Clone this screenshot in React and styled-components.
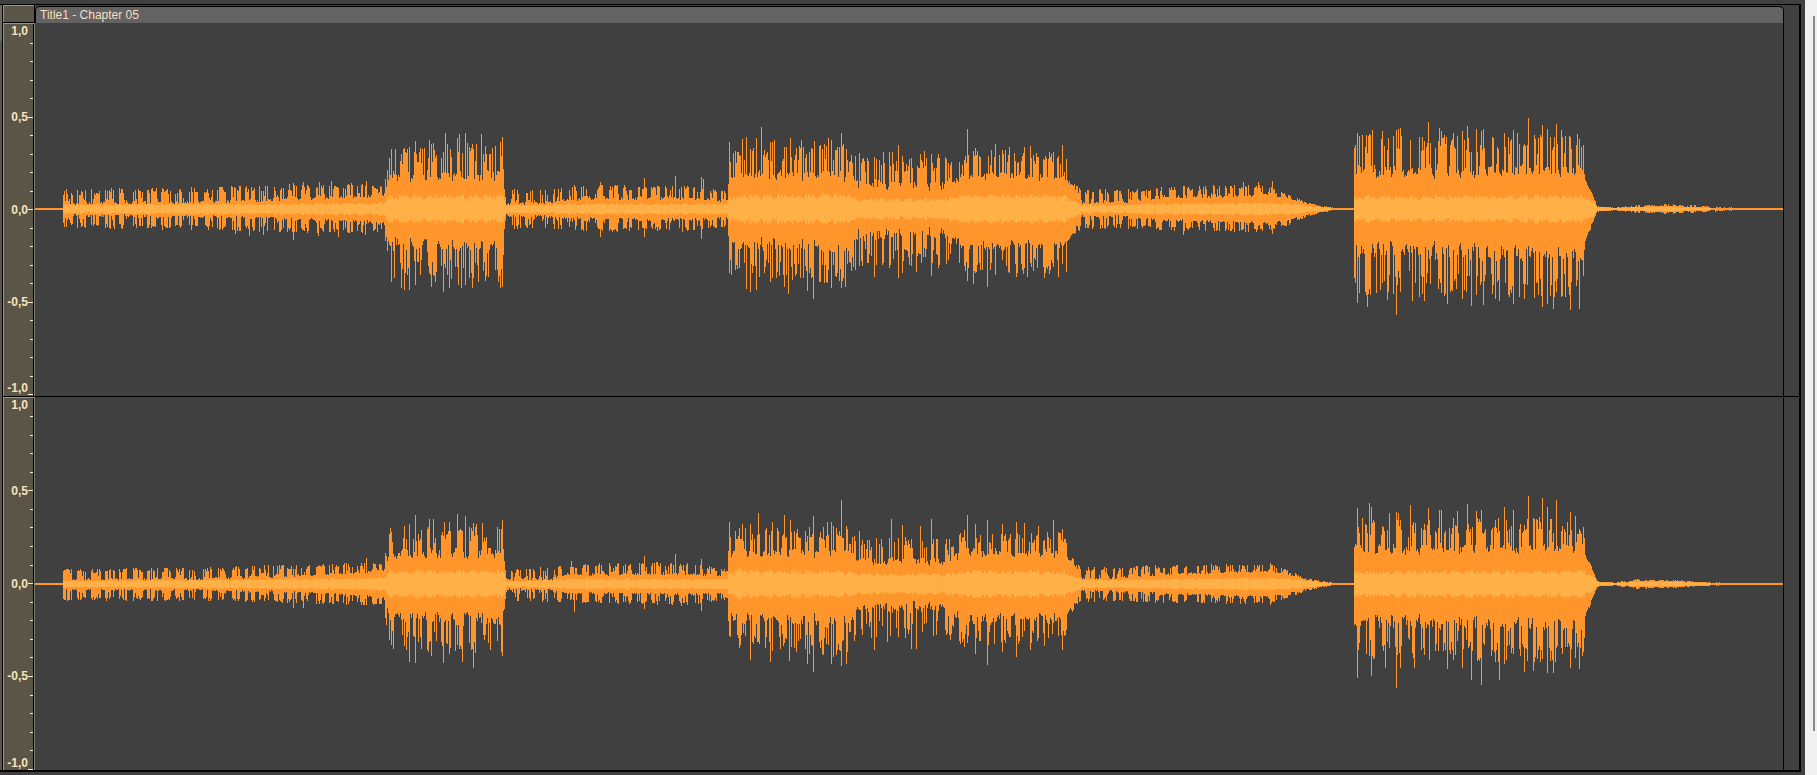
import React from 'react';

// third-party libraries
import styled, { createGlobalStyle } from 'styled-components';

const CLIP_START = 35;
const WAVE_WIDTH = 1748;
const WAVE_HEIGHT = 372;
const BEAT = 14;

// [x, valley up, peak up, valley down, peak down, rms]
const LEFT_ENVELOPE = [
  [63, 4, 20, 5, 20, 4],
  [200, 5, 22, 6, 21, 5],
  [300, 8, 25, 8, 25, 5],
  [383, 12, 25, 12, 24, 6],
  [389, 29, 60, 31, 68, 13],
  [502, 30, 65, 34, 74, 13],
  [504, 18, 28, 18, 28, 9],
  [506, 4, 20, 5, 21, 4],
  [552, 5, 20, 6, 20, 4],
  [566, 8, 24, 8, 22, 5],
  [680, 9, 25, 9, 24, 5],
  [727, 7, 18, 8, 18, 5],
  [729, 29, 60, 30, 66, 13],
  [842, 31, 66, 35, 76, 14],
  [860, 22, 50, 21, 57, 10],
  [945, 20, 52, 21, 57, 10],
  [965, 31, 56, 34, 66, 14],
  [1064, 29, 58, 33, 66, 13],
  [1074, 20, 25, 20, 25, 8],
  [1082, 5, 20, 6, 20, 4],
  [1120, 5, 20, 6, 20, 4],
  [1150, 9, 22, 9, 21, 5],
  [1270, 13, 25, 13, 24, 6],
  [1292, 9, 13, 9, 15, 5],
  [1310, 4, 6, 5, 7, 3],
  [1330, 1, 2, 1, 2, 1],
  [1335, 1, 1, 1, 1, 0],
  [1353, 1, 1, 1, 1, 0],
  [1354, 33, 74, 34, 86, 12],
  [1583, 34, 74, 40, 90, 13],
  [1586, 26, 30, 28, 34, 11],
  [1592, 13, 15, 12, 15, 8],
  [1597, 2, 3, 2, 3, 2],
  [1614, 1, 2, 1, 2, 1],
  [1640, 2, 4, 2, 4, 2],
  [1672, 3, 5, 3, 5, 2],
  [1710, 1, 3, 1, 3, 1],
  [1742, 1, 1, 1, 1, 0],
  [1783, 1, 1, 1, 1, 0],
];

const RIGHT_ENVELOPE = [
  [63, 3, 15, 4, 17, 3],
  [200, 4, 17, 5, 17, 4],
  [300, 7, 20, 7, 20, 5],
  [383, 12, 22, 12, 22, 6],
  [389, 27, 56, 28, 66, 13],
  [502, 28, 58, 32, 72, 13],
  [504, 16, 24, 16, 26, 9],
  [506, 3, 16, 4, 18, 3],
  [552, 4, 17, 5, 18, 4],
  [566, 8, 20, 8, 19, 5],
  [680, 9, 23, 9, 22, 5],
  [727, 7, 15, 8, 16, 5],
  [729, 27, 56, 29, 64, 13],
  [842, 29, 58, 33, 74, 13],
  [860, 20, 46, 20, 54, 10],
  [945, 20, 48, 20, 55, 10],
  [965, 29, 54, 32, 64, 13],
  [1064, 28, 54, 31, 62, 12],
  [1074, 18, 22, 18, 22, 8],
  [1082, 4, 17, 5, 18, 4],
  [1120, 5, 17, 6, 18, 4],
  [1150, 8, 19, 8, 19, 5],
  [1270, 12, 21, 12, 21, 6],
  [1292, 8, 12, 8, 12, 5],
  [1310, 3, 5, 4, 6, 3],
  [1330, 1, 2, 1, 2, 1],
  [1335, 1, 1, 1, 1, 0],
  [1353, 1, 1, 1, 1, 0],
  [1354, 31, 64, 32, 76, 12],
  [1583, 33, 66, 38, 80, 13],
  [1586, 26, 32, 28, 34, 11],
  [1592, 12, 15, 12, 15, 8],
  [1597, 2, 3, 2, 3, 2],
  [1614, 1, 2, 1, 2, 1],
  [1636, 3, 5, 3, 5, 2],
  [1672, 3, 4, 3, 4, 2],
  [1710, 1, 2, 1, 2, 1],
  [1734, 1, 1, 1, 1, 0],
  [1783, 1, 1, 1, 1, 0],
];

// loudest samples, [x, height]
const LEFT_PEAKS_UP = [
  [289, 25], [293, 26], [303, 27], [319, 27], [331, 28], [351, 26], [366, 28],
  [391, 60], [395, 60], [401, 55], [404, 61], [407, 60], [409, 62], [415, 68],
  [420, 61], [422, 60], [424, 61], [429, 69], [431, 65], [433, 66], [445, 76],
  [447, 65], [450, 60], [457, 71], [459, 75], [462, 56], [465, 76], [467, 66],
  [472, 65], [476, 65], [481, 75], [486, 55], [492, 61], [495, 63], [500, 67],
  [502, 72], [600, 27], [644, 31], [675, 33], [701, 32], [703, 30],
  [729, 67], [733, 56], [737, 57], [742, 70], [746, 72], [750, 60], [756, 71],
  [761, 82], [764, 59], [770, 67], [772, 67], [774, 69], [784, 62], [786, 62],
  [790, 71], [801, 69], [803, 62], [814, 68], [819, 63], [822, 60], [828, 71],
  [831, 69], [841, 76], [843, 65], [846, 60], [859, 56], [863, 51], [867, 51],
  [874, 52], [883, 57], [889, 57], [892, 57], [898, 64], [902, 53], [920, 55],
  [924, 58], [931, 55], [938, 55], [945, 52], [967, 80], [973, 58], [975, 61],
  [977, 58], [991, 59], [995, 65], [999, 54], [1002, 59], [1005, 59],
  [1009, 62], [1014, 56], [1024, 62], [1030, 63], [1038, 52], [1053, 57],
  [1062, 64], [1066, 50], [1243, 27], [1258, 27], [1272, 28], [1357, 76],
  [1362, 74], [1369, 75], [1372, 79], [1382, 78], [1396, 79], [1398, 80],
  [1400, 81], [1410, 69], [1419, 72], [1424, 68], [1428, 87], [1439, 81],
  [1441, 78], [1446, 72], [1453, 76], [1457, 73], [1462, 78], [1467, 83],
  [1476, 80], [1481, 78], [1483, 80], [1493, 71], [1504, 76], [1513, 79],
  [1517, 76], [1528, 91], [1540, 74], [1542, 84], [1547, 80], [1556, 85],
  [1561, 79], [1570, 72], [1577, 75], [1583, 64],
];

const LEFT_PEAKS_DOWN = [
  [235, 25], [249, 27], [263, 26], [293, 31], [318, 27], [338, 28], [365, 26],
  [391, 73], [394, 69], [401, 79], [404, 81], [409, 81], [415, 76], [420, 66],
  [431, 78], [435, 73], [443, 83], [449, 79], [458, 76], [461, 79], [465, 76],
  [472, 79], [478, 73], [488, 68], [495, 61], [500, 79], [502, 78], [600, 28],
  [644, 28], [701, 30], [731, 66], [737, 60], [746, 80], [750, 83], [756, 81],
  [764, 64], [770, 73], [776, 69], [784, 78], [788, 85], [792, 71], [803, 69],
  [807, 82], [813, 90], [819, 73], [827, 74], [831, 79], [841, 79], [845, 78],
  [853, 58], [859, 57], [867, 54], [874, 68], [882, 56], [889, 59], [898, 69],
  [902, 64], [916, 63], [931, 67], [938, 59], [967, 72], [973, 75], [982, 61],
  [987, 78], [995, 66], [1009, 64], [1016, 68], [1027, 68], [1044, 69],
  [1058, 68], [1066, 63], [1183, 26], [1272, 25], [1357, 94], [1367, 98],
  [1376, 84], [1387, 91], [1396, 106], [1400, 83], [1412, 92], [1419, 88],
  [1424, 92], [1447, 95], [1462, 90], [1471, 97], [1476, 86], [1483, 96],
  [1495, 90], [1499, 92], [1513, 95], [1519, 88], [1524, 90], [1542, 98],
  [1547, 95], [1553, 100], [1561, 88], [1570, 101], [1579, 100],
];

const RIGHT_PEAKS_UP = [
  [366, 26], [390, 56], [404, 58], [409, 60], [415, 68], [429, 64], [433, 64],
  [444, 62], [449, 62], [457, 69], [465, 67], [473, 61], [476, 60], [482, 61],
  [502, 63], [571, 23], [644, 28], [675, 30], [701, 25], [729, 62], [742, 60],
  [750, 60], [758, 70], [772, 62], [784, 68], [790, 63], [813, 67], [827, 62],
  [831, 62], [841, 83], [846, 58], [859, 53], [891, 64], [902, 59], [920, 58],
  [931, 64], [967, 68], [975, 60], [987, 63], [1002, 60], [1016, 62],
  [1024, 61], [1038, 58], [1053, 63], [1062, 55], [1357, 75], [1362, 65],
  [1369, 80], [1371, 76], [1389, 70], [1396, 71], [1398, 70], [1410, 78],
  [1428, 75], [1439, 73], [1441, 73], [1457, 72], [1467, 79], [1476, 72],
  [1481, 73], [1504, 76], [1513, 73], [1528, 87], [1542, 85], [1547, 76],
  [1556, 83], [1570, 71], [1575, 67],
];

const RIGHT_PEAKS_DOWN = [
  [293, 24], [303, 24], [393, 65], [409, 78], [415, 79], [431, 72], [443, 79],
  [449, 70], [462, 78], [473, 84], [502, 72], [574, 28], [644, 25], [701, 27],
  [750, 76], [770, 78], [789, 77], [807, 80], [813, 88], [831, 80], [841, 82],
  [846, 80], [874, 66], [887, 58], [911, 65], [916, 65], [975, 70], [987, 81],
  [1002, 68], [1016, 73], [1030, 66], [1044, 62], [1062, 66], [1357, 94],
  [1371, 92], [1385, 84], [1396, 104], [1400, 84], [1414, 84], [1447, 85],
  [1462, 84], [1471, 96], [1481, 101], [1499, 96], [1504, 80], [1524, 88],
  [1533, 87], [1547, 89], [1553, 89], [1570, 84], [1579, 85],
];

const noise = (x, salt) => {
  let h = Math.imul(x + salt * 7919, 2654435761);
  h = Math.imul(h ^ (h >>> 15), 2246822519);
  h = Math.imul(h ^ (h >>> 13), 3266489917);
  return ((h ^ (h >>> 16)) >>> 0) / 4294967296;
};

const envelopeAt = (envelope, x) => {
  if (x < envelope[0][0]) return [1, 1, 1, 1, 0];
  let i = 0;
  while (i < envelope.length - 2 && envelope[i + 1][0] <= x) i += 1;
  const a = envelope[i];
  const b = envelope[i + 1];
  const t = Math.min(1, (x - a[0]) / (b[0] - a[0]));
  return a.slice(1).map((v, n) => v + (b[n + 1] - v) * t);
};

const bar = (x, up, down) => {
  const mid = WAVE_HEIGHT / 2;
  return `M${x} ${mid - up}h1V${mid + down}h-1z`;
};

const buildWave = (envelope, peaksUp, peaksDown, salt) => {
  const up = new Map(peaksUp);
  const down = new Map(peaksDown);
  let peak = '';
  let rms = '';

  for (let i = 0; i < WAVE_WIDTH; i += 1) {
    const x = i + CLIP_START;
    const [lowUp, highUp, lowDown, highDown, body] = envelopeAt(envelope, x);
    // every beat opens with a burst and ends in a short gap
    const beat = Math.floor((x - 61) / BEAT);
    const phase = ((x - 61) % BEAT) / BEAT;
    const gap = phase < 0.1 || phase > 0.76 + noise(beat, 11) * 0.12;
    const quiet = highUp < 40;
    const level = (n) => {
      const r = noise(x, n);
      if (gap) return quiet ? r * 0.2 : r * 0.3 - 0.08;
      if (quiet) return r < 0.35 ? r * 1.2 : 0.4 + r * 0.6;
      return r < 0.42 ? r * 0.7 : 0.1 + r * 0.9;
    };
    const h = up.get(x) || Math.round(lowUp + (highUp - lowUp) * level(salt));
    const d = down.get(x) || Math.round(lowDown + (highDown - lowDown) * level(salt + (noise(x, 9) < 0.6 ? 0 : 1)));

    peak += bar(i, h, d);
    if (body >= 1) {
      const r = Math.round(body * (0.82 + noise(x, salt + 3) * 0.32) * (gap ? 0.86 : 1));
      rms += bar(i, Math.min(r, h), Math.min(r, d));
    }
  }
  return { peak, rms };
};

const CHANNELS = [
  { name: 'Left channel', wave: buildWave(LEFT_ENVELOPE, LEFT_PEAKS_UP, LEFT_PEAKS_DOWN, 1) },
  { name: 'Right channel', wave: buildWave(RIGHT_ENVELOPE, RIGHT_PEAKS_UP, RIGHT_PEAKS_DOWN, 5) },
];

const TICKS = Array.from({ length: 21 }, (_, i) => {
  const value = (10 - i) / 10;
  return { value, label: i % 5 === 0 ? value.toFixed(1).replace('.', ',') : null };
});

const Ruler = () => (
  <RulerColumn>
    {TICKS.map(({ value, label }) => (
      <Tick key={value} $edge={value === 1 ? 'flex-start' : value === -1 ? 'flex-end' : 'center'}>
        {label && <TickLabel>{label}</TickLabel>}
        <TickMark $major={label !== null} $hidden={value === 1} />
      </Tick>
    ))}
  </RulerColumn>
);

const Waveform = ({ name, wave }) => (
  <WaveSvg
    viewBox={`0 0 ${WAVE_WIDTH} ${WAVE_HEIGHT}`}
    preserveAspectRatio="none"
    shapeRendering="crispEdges"
    role="img"
    aria-label={name}
  >
    <path d={wave.peak} fill="#ff952b" />
    <path d={wave.rms} fill="#ffb047" />
  </WaveSvg>
);

const App = () => (
  <Page>
    <GlobalStyle />
    <Editor>
      <Panel>
        <Edge><EdgeGrip /></Edge>
        <Content>
          <HeaderRow>
            <Corner />
            <ClipHeader>Title1 - Chapter 05</ClipHeader>
            <Rest />
          </HeaderRow>
          {CHANNELS.map(({ name, wave }) => (
            <Track key={name}>
              <Ruler />
              <Clip>
                <Waveform name={name} wave={wave} />
              </Clip>
              <Rest />
            </Track>
          ))}
        </Content>
      </Panel>
    </Editor>
    <ScrollArea>
      <ScrollThumb />
    </ScrollArea>
  </Page>
);

export default App;

const GlobalStyle = createGlobalStyle`
  * {
    box-sizing: border-box;
  }

  body {
    margin: 0;
    background: #404040;
    font-family: "Liberation Sans", Arial, sans-serif;
    font-size: 12px;
  }
`;

const Page = styled.div`
  display: flex;
  height: 100vh;
  min-height: 400px;
`;

const Editor = styled.main`
  flex: 1;
  min-width: 0;
  display: flex;
  padding: 4px 4px 3px 0;
  background: #404040;
`;

const Panel = styled.section`
  flex: 1;
  min-width: 0;
  display: flex;
  border: solid #000000;
  border-width: 1px 2px 2px 0;
`;

const Edge = styled.div`
  width: 3px;
  background: #5a5546;
  border-right: 1px solid #000000;
`;

const EdgeGrip = styled.div`
  height: 36px;
  background: #6e6c62;
`;

const Content = styled.div`
  flex: 1;
  min-width: 0;
  display: flex;
  flex-direction: column;
`;

const HeaderRow = styled.header`
  display: flex;
  height: 18px;
`;

const Corner = styled.div`
  width: 32px;
  background: #5a5546;
  border: solid #000000;
  border-width: 0 1px 1px 0;
  box-shadow: inset 1px 1px #98958a;
`;

const ClipHeader = styled.h1`
  flex: 1;
  margin: 1px 0 0;
  padding-left: 4px;
  border: 1px solid #000000;
  border-bottom: 0;
  border-radius: 5px 5px 0 0;
  background: #636363;
  color: #f3dfc0;
  font-size: 12px;
  font-weight: normal;
  line-height: 16px;
`;

const Rest = styled.div`
  width: 15px;
`;

const Track = styled.div`
  flex: 1 1 0;
  min-height: 0;
  display: flex;
  border-bottom: 1px solid #000000;

  &:last-child {
    flex-basis: 1px;
    border-bottom: 0;
  }
`;

const RulerColumn = styled.div`
  width: 31px;
  display: flex;
  flex-direction: column;
  justify-content: space-between;
  background: #5a5546;
  border: solid #98958a;
  border-width: 1px 0 0 1px;
  box-shadow: inset -1px 0 #000000;
  padding-right: 1px;
`;

const Tick = styled.div`
  height: 1px;
  display: flex;
  justify-content: flex-end;
  align-items: ${props => props.$edge};
`;

const TickLabel = styled.span`
  color: #f5e3bd;
  font-weight: bold;
  line-height: 14px;
`;

const TickMark = styled.i`
  width: ${props => (props.$major ? 5 : 3)}px;
  height: 1px;
  background: #fbeccb;
  visibility: ${props => (props.$hidden ? 'hidden' : 'visible')};
`;

const Clip = styled.div`
  flex: 1;
  min-width: 0;
  border: solid #7d7b74;
  border-width: 0 0 0 1px;
  box-shadow: 1px 0 #000000;
  margin-right: 1px;
`;

const WaveSvg = styled.svg`
  display: block;
  width: 100%;
  height: 100%;
`;

const ScrollArea = styled.aside`
  width: 12px;
  padding: 16px 2px 44px 8px;
  background: #f0f0f0;
`;

const ScrollThumb = styled.div`
  height: 100%;
  background: #8a8a8a;
`;
